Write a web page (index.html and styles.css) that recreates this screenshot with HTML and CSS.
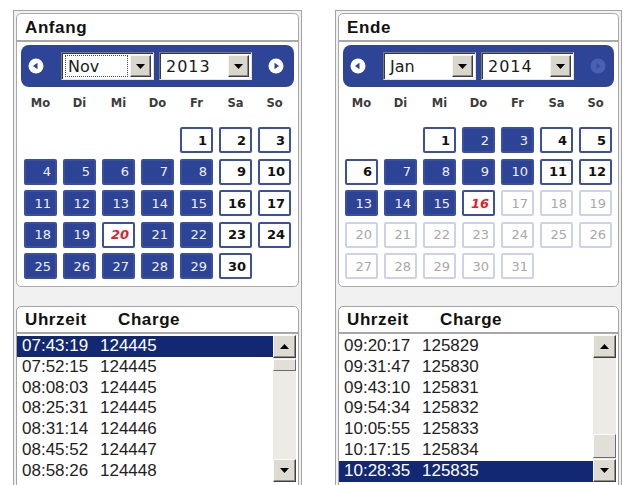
FILE: index.html
```html
<!DOCTYPE html>
<html lang="de">
<head>
<meta charset="utf-8">
<title>Zeitraum</title>
<link rel="stylesheet" href="styles.css">
</head>
<body>
<div class="page">

  <section class="panel panel--start">
    <div class="calendar">
      <div class="cal-title">Anfang</div>
      <div class="cal-nav">
        <span class="nav-btn nav-btn--prev"><svg viewBox="0 0 16 16" width="16" height="16"><circle cx="8" cy="8" r="7.5" fill="#fff"/><polygon points="5,8 9.5,4.8 9.5,11.2" fill="#2e4497"/></svg></span>
        <div class="combo combo--focus"><span class="combo-text">Nov</span><span class="combo-btn"><svg viewBox="0 0 9 5" width="9" height="5"><polygon points="0,0 9,0 4.5,5" fill="#000"/></svg></span></div>
        <div class="combo"><span class="combo-text combo-text--year">2013</span><span class="combo-btn"><svg viewBox="0 0 9 5" width="9" height="5"><polygon points="0,0 9,0 4.5,5" fill="#000"/></svg></span></div>
        <span class="nav-btn nav-btn--next"><svg viewBox="0 0 16 16" width="16" height="16"><circle cx="8" cy="8" r="7.5" fill="#fff"/><polygon points="11,8 6.5,4.8 6.5,11.2" fill="#2e4497"/></svg></span>
      </div>
      <div class="dow"><span>Mo</span><span>Di</span><span>Mi</span><span>Do</span><span>Fr</span><span>Sa</span><span>So</span></div>
      <div class="days">
        <span class="day day--empty"></span><span class="day day--empty"></span><span class="day day--empty"></span><span class="day day--empty"></span>
        <span class="day day--free">1</span><span class="day day--free">2</span><span class="day day--free">3</span>
        <span class="day day--busy">4</span><span class="day day--busy">5</span><span class="day day--busy">6</span><span class="day day--busy">7</span><span class="day day--busy">8</span>
        <span class="day day--free">9</span><span class="day day--free">10</span>
        <span class="day day--busy">11</span><span class="day day--busy">12</span><span class="day day--busy">13</span><span class="day day--busy">14</span><span class="day day--busy">15</span>
        <span class="day day--free">16</span><span class="day day--free">17</span>
        <span class="day day--busy">18</span><span class="day day--busy">19</span><span class="day day--today">20</span><span class="day day--busy">21</span><span class="day day--busy">22</span>
        <span class="day day--free">23</span><span class="day day--free">24</span>
        <span class="day day--busy">25</span><span class="day day--busy">26</span><span class="day day--busy">27</span><span class="day day--busy">28</span><span class="day day--busy">29</span>
        <span class="day day--free">30</span>
      </div>
    </div>

    <div class="list">
      <div class="list-head"><span class="head-time">Uhrzeit</span><span>Charge</span></div>
      <div class="list-body">
        <ul class="rows">
          <li class="row row--sel"><span class="col-time">07:43:19</span><span>124445</span></li>
          <li class="row"><span class="col-time">07:52:15</span><span>124445</span></li>
          <li class="row"><span class="col-time">08:08:03</span><span>124445</span></li>
          <li class="row"><span class="col-time">08:25:31</span><span>124445</span></li>
          <li class="row"><span class="col-time">08:31:14</span><span>124446</span></li>
          <li class="row"><span class="col-time">08:45:52</span><span>124447</span></li>
          <li class="row"><span class="col-time">08:58:26</span><span>124448</span></li>
        </ul>
        <div class="scrollbar">
          <span class="sb-btn"><svg viewBox="0 0 9 5" width="9" height="5"><polygon points="0,5 9,5 4.5,0" fill="#000"/></svg></span>
          <span class="sb-track"><span class="sb-thumb sb-thumb--small"></span></span>
          <span class="sb-btn"><svg viewBox="0 0 9 5" width="9" height="5"><polygon points="0,0 9,0 4.5,5" fill="#000"/></svg></span>
        </div>
      </div>
    </div>
  </section>

  <section class="panel panel--end">
    <div class="calendar">
      <div class="cal-title">Ende</div>
      <div class="cal-nav">
        <span class="nav-btn nav-btn--prev"><svg viewBox="0 0 16 16" width="16" height="16"><circle cx="8" cy="8" r="7.5" fill="#fff"/><polygon points="5,8 9.5,4.8 9.5,11.2" fill="#2e4497"/></svg></span>
        <div class="combo"><span class="combo-text">Jan</span><span class="combo-btn"><svg viewBox="0 0 9 5" width="9" height="5"><polygon points="0,0 9,0 4.5,5" fill="#000"/></svg></span></div>
        <div class="combo"><span class="combo-text combo-text--year">2014</span><span class="combo-btn"><svg viewBox="0 0 9 5" width="9" height="5"><polygon points="0,0 9,0 4.5,5" fill="#000"/></svg></span></div>
        <span class="nav-btn nav-btn--next"><svg viewBox="0 0 16 16" width="16" height="16"><circle cx="8" cy="8" r="7.5" fill="#4a61b3"/><polygon points="11,8 6.5,4.8 6.5,11.2" fill="#3850a4"/></svg></span>
      </div>
      <div class="dow"><span>Mo</span><span>Di</span><span>Mi</span><span>Do</span><span>Fr</span><span>Sa</span><span>So</span></div>
      <div class="days">
        <span class="day day--empty"></span><span class="day day--empty"></span>
        <span class="day day--free">1</span><span class="day day--busy">2</span><span class="day day--busy">3</span><span class="day day--free">4</span><span class="day day--free">5</span>
        <span class="day day--free">6</span><span class="day day--busy">7</span><span class="day day--busy">8</span><span class="day day--busy">9</span><span class="day day--busy">10</span><span class="day day--free">11</span><span class="day day--free">12</span>
        <span class="day day--busy">13</span><span class="day day--busy">14</span><span class="day day--busy">15</span><span class="day day--today">16</span><span class="day day--off">17</span><span class="day day--off">18</span><span class="day day--off">19</span>
        <span class="day day--off">20</span><span class="day day--off">21</span><span class="day day--off">22</span><span class="day day--off">23</span><span class="day day--off">24</span><span class="day day--off">25</span><span class="day day--off">26</span>
        <span class="day day--off">27</span><span class="day day--off">28</span><span class="day day--off">29</span><span class="day day--off">30</span><span class="day day--off">31</span>
      </div>
    </div>

    <div class="list">
      <div class="list-head"><span class="head-time">Uhrzeit</span><span>Charge</span></div>
      <div class="list-body">
        <ul class="rows">
          <li class="row"><span class="col-time">09:20:17</span><span>125829</span></li>
          <li class="row"><span class="col-time">09:31:47</span><span>125830</span></li>
          <li class="row"><span class="col-time">09:43:10</span><span>125831</span></li>
          <li class="row"><span class="col-time">09:54:34</span><span>125832</span></li>
          <li class="row"><span class="col-time">10:05:55</span><span>125833</span></li>
          <li class="row"><span class="col-time">10:17:15</span><span>125834</span></li>
          <li class="row row--sel"><span class="col-time">10:28:35</span><span>125835</span></li>
        </ul>
        <div class="scrollbar">
          <span class="sb-btn"><svg viewBox="0 0 9 5" width="9" height="5"><polygon points="0,5 9,5 4.5,0" fill="#000"/></svg></span>
          <span class="sb-track sb-track--end"><span class="sb-thumb"></span></span>
          <span class="sb-btn"><svg viewBox="0 0 9 5" width="9" height="5"><polygon points="0,0 9,0 4.5,5" fill="#000"/></svg></span>
        </div>
      </div>
    </div>
  </section>

</div>
</body>
</html>
```

FILE: styles.css
```css
* {
  box-sizing: border-box;
}

html, body {
  margin: 0;
  padding: 0;
  background: #fff;
}

body {
  width: 624px;
  height: 485px;
  overflow: hidden;
  font-family: "Liberation Sans", Arial, sans-serif;
  color: #111;
}

.page {
  display: flex;
  align-items: flex-start;
  gap: 33px;
  padding: 10px 0 0 13px;
}

/* outer frame of each date picker */
.panel {
  height: 500px;
  border: 1px solid #a3a3a3;
  background: #f1f1f1;
  padding: 2px;
}

.panel--start { width: 289px; }
.panel--end { width: 287px; }

/* calendar card */
.calendar {
  background: #fff;
  border: 1px solid #a9a9a9;
  border-radius: 5px;
  padding-bottom: 7px;
}

.cal-title {
  height: 28px;
  padding: 1px 0 0 8px;
  line-height: 26px;
  font-weight: bold;
  font-size: 17px;
  letter-spacing: 0.6px;
  border-bottom: 2px solid #a8a8a8;
  color: #111;
}

.cal-nav {
  display: flex;
  align-items: center;
  height: 42px;
  margin: 3px 4px 0;
  padding: 0 0 0 7px;
  background: #2e4497;
  border-radius: 8px;
}

.nav-btn {
  display: flex;
  width: 16px;
  height: 16px;
  flex: none;
}

.nav-btn--prev { margin-right: 17px; }
.nav-btn--next { margin-left: 16px; }

/* dropdown fields */
.combo {
  display: flex;
  align-items: center;
  width: 93px;
  height: 28px;
  background: #fff;
  border-top: 1px solid #7a7a7a;
  border-left: 1px solid #7a7a7a;
  border-right: 1px solid #e4e4e4;
  border-bottom: 1px solid #e4e4e4;
  box-shadow: inset 1px 1px 0 #3a3a3a;
  padding: 2px 2px 2px 3px;
}

.combo + .combo { margin-left: 5px; }

.combo-text {
  flex: 1;
  height: 100%;
  display: flex;
  align-items: center;
  padding-left: 3px;
  font-family: "DejaVu Sans", Verdana, sans-serif;
  font-size: 16px;
  color: #1a1a1a;
}

.combo-text--year { letter-spacing: 1px; }

.combo--focus .combo-text {
  outline: 1px dotted #444;
  outline-offset: -1px;
}

.combo-btn {
  display: flex;
  align-items: center;
  justify-content: center;
  width: 21px;
  height: 100%;
  margin-left: 2px;
  background: #d9d6ce;
  border-top: 1px solid #f4f3ef;
  border-left: 1px solid #f4f3ef;
  border-right: 1px solid #3e3e3e;
  border-bottom: 1px solid #3e3e3e;
  box-shadow: inset -1px -1px 0 #8d8b85;
}

/* weekday header and day grid */
.dow,
.days {
  display: grid;
  grid-template-columns: repeat(7, 33px);
  column-gap: 6px;
  width: 267px;
  margin: 0 auto;
}

.dow {
  margin-top: 7px;
  height: 18px;
  line-height: 18px;
  text-align: center;
  font-family: "DejaVu Sans", Verdana, sans-serif;
  font-size: 11.5px;
  font-weight: bold;
  color: #3c3c3c;
}

.days {
  margin-top: 15px;
  grid-auto-rows: 26px;
  row-gap: 5.5px;
}

.day {
  display: flex;
  align-items: center;
  justify-content: flex-end;
  padding-right: 4px;
  border: 2px solid transparent;
  border-radius: 2px;
  font-family: "DejaVu Sans", Verdana, sans-serif;
  font-size: 13px;
}

.day--busy {
  background: #2d4396;
  border-color: #3a4f9f;
  color: #eef0fa;
}

.day--free {
  background: #fff;
  border-color: #3b4fa3;
  color: #111;
  font-weight: bold;
}

.day--today {
  background: #fff;
  border-color: #3b4fa3;
  color: #e3202b;
  font-weight: bold;
  font-style: italic;
}

.day--off {
  background: #fff;
  border-color: #cdd2ec;
  color: #a8a8a8;
}

/* list of batches */
.list {
  margin-top: 19px;
  height: 200px;
  background: #fff;
  border: 1px solid #a3a3a3;
  border-radius: 5px 5px 0 0;
}

.list-head {
  display: flex;
  height: 27px;
  padding: 1px 0 0 8px;
  line-height: 24px;
  font-weight: bold;
  font-size: 17px;
  letter-spacing: 0.6px;
  border-bottom: 2px solid #a8a8a8;
}

.head-time { width: 93px; }

.list-body {
  display: flex;
  align-items: flex-start;
}

.rows {
  flex: 1;
  list-style: none;
  margin: 0;
  padding: 2px 0 0;
  min-width: 0;
}

.row {
  display: flex;
  height: 20.8px;
  line-height: 20.8px;
  padding-left: 5px;
  font-size: 17px;
  color: #1e1e1e;
}

.row--sel {
  background: #132872;
  color: #fff;
}

.col-time { width: 78px; }

/* scrollbar */
.scrollbar {
  display: flex;
  flex-direction: column;
  width: 23px;
  margin: 1px 2px 0 0;
  height: 147px;
  background: #ecebe5;
}

.sb-btn {
  display: flex;
  align-items: center;
  justify-content: center;
  height: 23px;
  flex: none;
  background: #dedbd3;
  border-top: 1px solid #fbfaf7;
  border-left: 1px solid #fbfaf7;
  border-right: 1px solid #3e3e3e;
  border-bottom: 1px solid #3e3e3e;
  box-shadow: inset -1px -1px 0 #918e87;
}

.sb-track {
  flex: 1;
  display: flex;
  flex-direction: column;
  justify-content: flex-start;
}

.sb-track--end { justify-content: flex-end; }

.sb-thumb {
  height: 24px;
  margin-bottom: 1px;
  background: #e2dfd8;
  border-top: 1px solid #fbfaf7;
  border-left: 1px solid #fbfaf7;
  border-right: 1px solid #6b6b6b;
  border-bottom: 1px solid #6b6b6b;
}

.sb-thumb--small {
  height: 12px;
  margin: 1px 0 0;
}
```
